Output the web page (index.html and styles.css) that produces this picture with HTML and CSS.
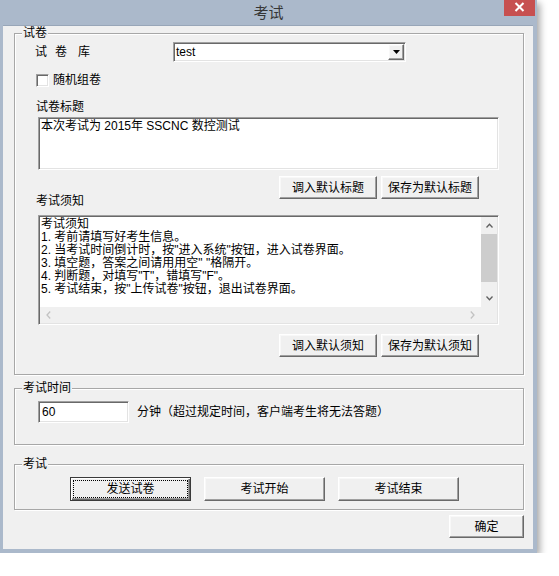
FILE: index.html
```html
<!DOCTYPE html>
<html>
<head>
<meta charset="utf-8">
<title>考试</title>
<link rel="stylesheet" href="styles.css">
</head>
<body>
<div class="window">
  <div class="titlebar">
    <div class="title">考试</div>
    <div class="close">
      <svg width="31" height="16" viewBox="0 0 31 16"><path d="M11.5 3 L19.5 11 M19.5 3 L11.5 11" stroke="#fff" stroke-width="2" fill="none"/></svg>
    </div>
  </div>
  <div class="client">
    <div class="group g-paper">
      <span class="glabel">试卷</span>
      <div class="row-lib">
        <span class="lib-label"><span class="c1">试</span><span class="c2">卷</span><span>库</span></span>
        <div class="combo sunken">
          <span class="combo-text">test</span>
          <span class="combo-btn raised"><svg width="7" height="4" viewBox="0 0 7 4"><path d="M0 0 H7 L3.5 4 Z" fill="#000"/></svg></span>
        </div>
      </div>
      <div class="check-row"><span class="checkbox sunken"></span><span class="check-text">随机组卷</span></div>
      <div class="field-label">试卷标题</div>
      <div class="textbox sunken tb-title">本次考试为 2015年 SSCNC 数控测试</div>
      <div class="btn-row btn-row1">
        <button class="btn raised">调入默认标题</button>
        <button class="btn raised">保存为默认标题</button>
      </div>
      <div class="field-label lbl-notice">考试须知</div>
      <div class="textbox sunken tb-notice">
        <div class="notice-text">考试须知<br>1. 考前请填写好考生信息。<br>2. 当考试时间倒计时，按"进入系统"按钮，进入试卷界面。<br>3. 填空题，答案之间请用用空" "格隔开。<br>4. 判断题，对填写"T"，错填写"F"。<br>5. 考试结束，按"上传试卷"按钮，退出试卷界面。</div>
        <div class="vscroll">
          <span class="sb-arrow"><svg width="7" height="5" viewBox="0 0 7 5"><path d="M0.5 4.5 L3.5 1.2 L6.5 4.5" fill="none" stroke="#606060" stroke-width="1.3"/></svg></span>
          <span class="thumb"></span>
          <span class="sb-gap"></span>
          <span class="sb-arrow"><svg width="7" height="5" viewBox="0 0 7 5"><path d="M0.5 0.5 L3.5 3.8 L6.5 0.5" fill="none" stroke="#606060" stroke-width="1.3"/></svg></span>
        </div>
        <div class="hscroll">
          <span class="hb-arrow"><svg width="5" height="8" viewBox="0 0 5 8"><path d="M4.2 0.5 L1 4 L4.2 7.5" fill="none" stroke="#c2c2c2" stroke-width="1.3"/></svg></span>
          <span class="hb-arrow"><svg width="5" height="8" viewBox="0 0 5 8"><path d="M0.8 0.5 L4 4 L0.8 7.5" fill="none" stroke="#c2c2c2" stroke-width="1.3"/></svg></span>
        </div>
        <div class="corner"></div>
      </div>
      <div class="btn-row btn-row2">
        <button class="btn raised">调入默认须知</button>
        <button class="btn raised">保存为默认须知</button>
      </div>
    </div>

    <div class="group g-time">
      <span class="glabel">考试时间</span>
      <div class="textbox sunken tb-time">60</div>
      <span class="time-note">分钟（超过规定时间，客户端考生将无法答题）</span>
    </div>

    <div class="group g-exam">
      <span class="glabel">考试</span>
      <button class="btn btn-wide btn-default"><span class="focus">发送试卷</span></button>
      <button class="btn btn-wide raised">考试开始</button>
      <button class="btn btn-wide raised">考试结束</button>
    </div>

    <div class="ok-row">
      <button class="btn btn-ok raised">确定</button>
    </div>
  </div>
</div>
</body>
</html>
```

FILE: styles.css
```css
* {
  box-sizing: border-box;
}

html,
body {
  margin: 0;
  padding: 0;
}

body {
  background: #ffffff;
  font-family: "Liberation Sans", "Noto Sans CJK SC", sans-serif;
  font-size: 12px;
  color: #000000;
}

.window {
  width: 537px;
  height: 553px;
  background: #abb9cb;
  display: flex;
  flex-direction: column;
  box-shadow: 3px 3px 7px rgba(0, 0, 0, 0.35);
}

.titlebar {
  height: 25px;
  flex: none;
  display: grid;
  grid-template-columns: 1fr auto 1fr;
}

.title {
  grid-column: 2;
  font-family: "Noto Sans CJK SC", sans-serif;
  font-size: 15px;
  line-height: 24px;
  color: #363636;
}

.close {
  grid-column: 3;
  justify-self: end;
  width: 31px;
  height: 16px;
  margin-right: 2px;
  background: #c75050;
  display: flex;
}

.client {
  flex: 1;
  margin: 0 4px 4px 3px;
  background: #f0f0f0;
  border-top: 1px solid #98a6b8;
}

/* 3D styles */
.sunken {
  background: #ffffff;
  border: 1px solid;
  border-color: #a0a0a0 #ffffff #ffffff #a0a0a0;
  box-shadow: inset 1px 1px #696969, inset -1px -1px #e3e3e3;
}

.raised {
  background: #f0f0f0;
  border: 1px solid;
  border-color: #ffffff #696969 #696969 #ffffff;
  box-shadow: inset -1px -1px #a0a0a0, inset 1px 1px #f8f8f8;
}

/* group boxes */
.group {
  position: relative;
  width: 510px;
  margin-left: 11px;
  border: 1px solid #a7a7a7;
  box-shadow: inset 1px 1px #ffffff, 1px 1px #ffffff;
}

.glabel {
  position: absolute;
  top: -8px;
  left: 7px;
  padding: 0 1px;
  background: #f0f0f0;
  line-height: 14px;
  white-space: nowrap;
}

.g-paper {
  margin-top: 7px;
  height: 342px;
}

.row-lib {
  display: flex;
  align-items: center;
  height: 20px;
  margin-top: 8px;
}

.lib-label {
  display: flex;
  width: 138px;
  margin-left: 20px;
  line-height: 14px;
}

.lib-label .c1 {
  margin-right: 8px;
}

.lib-label .c2 {
  margin-right: 11px;
}

.combo {
  width: 233px;
  height: 20px;
  display: flex;
  padding: 1px;
}

.combo-text {
  flex: 1;
  padding-left: 1px;
  line-height: 16px;
}

.combo-btn {
  width: 16px;
  height: 16px;
  display: flex;
  align-items: center;
  justify-content: center;
}

.check-row {
  display: flex;
  align-items: center;
  gap: 4px;
  height: 13px;
  margin: 12px 0 0 21px;
}

.checkbox {
  width: 13px;
  height: 13px;
  flex: none;
}

.check-text {
  line-height: 13px;
}

.field-label {
  margin: 13px 0 0 21px;
  line-height: 14px;
}

.textbox {
  white-space: nowrap;
}

.tb-title {
  width: 461px;
  height: 53px;
  margin: 3px 0 0 23px;
  padding: 2px;
  line-height: 13px;
}

.btn-row {
  display: flex;
  justify-content: flex-end;
  gap: 4px;
  margin-right: 44px;
}

.btn-row1 {
  margin-top: 6px;
}

.btn-row2 {
  margin-top: 9px;
}

.btn {
  width: 98px;
  height: 23px;
  padding: 0;
  font: inherit;
  color: #000000;
  line-height: 14px;
}

.lbl-notice {
  margin-top: -5px;
}

.tb-notice {
  width: 461px;
  height: 110px;
  margin: 7px 0 0 23px;
  padding: 1px;
  display: grid;
  grid-template-columns: 1fr 16px;
  grid-template-rows: 1fr 16px;
}

.notice-text {
  padding: 1px 0 0 1px;
  line-height: 13px;
  overflow: hidden;
}

.vscroll {
  background: #f0f0f0;
  display: flex;
  flex-direction: column;
}

.sb-arrow {
  height: 17px;
  display: flex;
  align-items: center;
  justify-content: center;
}

.thumb {
  height: 48px;
  background: #cdcdcd;
}

.sb-gap {
  flex: 1;
}

.hscroll {
  background: #f0f0f0;
  display: flex;
  justify-content: space-between;
}

.hb-arrow {
  width: 17px;
  display: flex;
  align-items: center;
  justify-content: center;
}

.corner {
  background: #f0f0f0;
}

/* time group */
.g-time {
  margin-top: 13px;
  height: 57px;
  padding: 12px 0 0 23px;
  display: flex;
  align-items: flex-start;
}

.tb-time {
  width: 91px;
  height: 22px;
  padding: 2px 3px;
  line-height: 16px;
}

.time-note {
  margin-left: 8px;
  line-height: 22px;
}

/* exam group */
.g-exam {
  margin-top: 19px;
  height: 46px;
  padding: 12px 0 0 55px;
  display: flex;
  align-items: flex-start;
  gap: 13px;
}

.btn-wide {
  width: 121px;
  height: 24px;
}

.btn-default {
  background: #f0f0f0;
  border: 1px solid #3a3a3a;
  box-shadow: inset 1px 1px #ffffff, inset -1px -1px #696969, inset -2px -2px #a0a0a0;
  padding: 2px;
  display: flex;
}

.focus {
  flex: 1;
  border: 1px dotted #000000;
  display: flex;
  align-items: center;
  justify-content: center;
}

.ok-row {
  display: flex;
  justify-content: flex-end;
  margin: 5px 9px 0 0;
}

.btn-ok {
  width: 75px;
  height: 23px;
}
```
